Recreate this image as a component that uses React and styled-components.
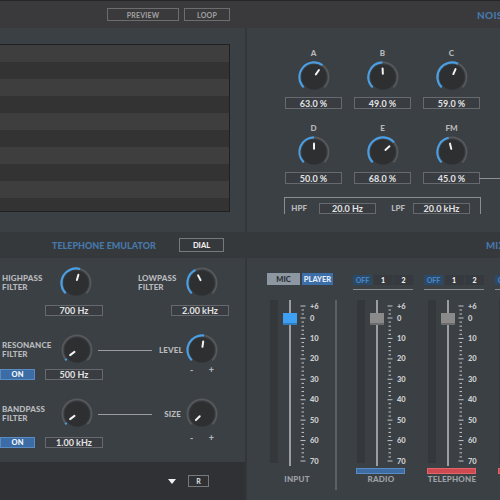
import React from 'react';
import styled, { createGlobalStyle } from 'styled-components';

const Global = createGlobalStyle`
  html, body { margin: 0; padding: 0; background: #2d3033; }
  body { font-family: Lato, "Open Sans", "Liberation Sans", sans-serif; }
  #root { width: 500px; height: 500px; }
`;

const Root = styled.div`
  width: 500px;
  height: 500px;
  overflow: hidden;
  display: flex;
  flex-direction: column;
  background: #32363a;
  font-family: Lato, "Open Sans", "Liberation Sans", sans-serif;
`;

/* ---------- top bar ---------- */
const TopBar = styled.div`
  flex: none;
  height: 27px;
  display: flex;
  background: #3a3a3c;
  border-top: 1px solid #262627;
`;
const TopLeft = styled.div`
  width: 245px;
  flex: none;
  box-sizing: border-box;
  display: flex;
  align-items: flex-start;
  gap: 5px;
  padding: 7px 0 0 107px;
`;
const TopButton = styled.div`
  width: ${p => p.$w}px;
  height: 13px;
  box-sizing: border-box;
  border: 1px solid #6d6d6f;
  color: #a2a2a2;
  font-size: 7px;
  font-weight: 700;
  letter-spacing: 0.2px;
  display: flex;
  align-items: center;
  justify-content: center;
`;
const BarRight = styled.div`
  flex: 1;
  display: flex;
  align-items: center;
  padding-left: ${p => p.$pl}px;
  overflow: hidden;
`;
const SectionTitle = styled.div`
  color: #4678ab;
  font-size: ${p => p.$size || 10}px;
  font-weight: 900;
  letter-spacing: ${p => p.$ls ?? 0.3}px;
  white-space: nowrap;
`;

/* ---------- generic rows / panels ---------- */
const PanelRow = styled.div`
  flex: none;
  height: ${p => p.$h}px;
  display: flex;
  gap: 2px;
  background: #33373b;
`;
const Panel = styled.div`
  background: #3b4045;
  box-sizing: border-box;
  ${p => (p.$w ? `width:${p.$w}px; flex:none;` : 'flex:1;')}
  ${p => (p.$h ? `height:${p.$h}px; flex:none;` : '')}
  padding: ${p => p.$pad || '0'};
  position: relative;
  overflow: hidden;
`;
const Column = styled.div`
  width: ${p => p.$w}px;
  flex: none;
  display: flex;
  flex-direction: column;
`;

/* ---------- display ---------- */
const Display = styled.div`
  margin-top: 16px;
  width: 230px;
  height: 168px;
  box-sizing: border-box;
  border: 1px solid #1f2021;
  border-left: none;
  background: repeating-linear-gradient(
    to bottom,
    #3e3e3e 0px,
    #3e3e3e 17px,
    #333333 17px,
    #333333 34px
  );
`;

/* ---------- knobs ---------- */
const KnobSvg = styled.svg`
  display: block;
  flex: none;
`;

function Knob({ v, className }) {
  const c = 17;
  const r = 14.6;
  const pt = (a, rr) => {
    const t = (a * Math.PI) / 180;
    return [c + rr * Math.sin(t), c - rr * Math.cos(t)];
  };
  const arc = (a0, a1) => {
    const [x0, y0] = pt(a0, r);
    const [x1, y1] = pt(a1, r);
    const large = a1 - a0 > 180 ? 1 : 0;
    return `M${x0.toFixed(2)} ${y0.toFixed(2)} A${r} ${r} 0 ${large} 1 ${x1.toFixed(2)} ${y1.toFixed(2)}`;
  };
  const a = -135 + v * 270;
  const [px0, py0] = pt(a, 3.2);
  const [px1, py1] = pt(a, 8.6);
  return (
    <KnobSvg className={className} width="34" height="34" viewBox="0 0 34 34">
      <circle cx={c} cy={c} r="12.6" fill="#2e2f31" />
      <path d={arc(-135, 135)} stroke="#58595b" strokeWidth="1.7" fill="none" />
      {v > 0.01 && <path d={arc(-135, a)} stroke="#4a9fe4" strokeWidth="2.1" fill="none" />}
      <line x1={px0} y1={py0} x2={px1} y2={py1} stroke="#f2f2f2" strokeWidth="2" strokeLinecap="round" />
    </KnobSvg>
  );
}

const ValueBox = styled.div`
  position: relative;
  width: ${p => p.$w || 57}px;
  height: ${p => p.$h || 12}px;
  box-sizing: border-box;
  border: 1px solid #66696d;
  background: #393d42;
  color: #e2e2e2;
  font-size: 9px;
  font-weight: 700;
  display: flex;
  align-items: center;
  justify-content: center;
  white-space: nowrap;
  ${p =>
    p.$tail
      ? `&::after { content: ''; position: absolute; left: 100%; top: 50%; width: 30px; height: 1px; background: #8d9094; }`
      : ''}
`;

/* ---------- noise section ---------- */
const KnobGrid = styled.div`
  display: grid;
  grid-template-columns: repeat(3, 57px);
  column-gap: 12px;
  row-gap: 14px;
`;
const KnobCell = styled.div`
  display: flex;
  flex-direction: column;
  align-items: center;
`;
const KnobLabel = styled.div`
  height: 10px;
  line-height: 10px;
  font-size: 8px;
  font-weight: 900;
  color: #b7b8ba;
  margin-bottom: 2px;
`;
const CellKnob = styled(Knob)`
  margin-bottom: 3px;
`;
const Bracket = styled.div`
  margin-top: 13px;
  width: 197px;
  height: 17px;
  box-sizing: border-box;
  border: 1px solid #8a8d91;
  border-bottom: none;
  padding-top: 4px;
  display: grid;
  grid-template-columns: 34px 57px 37px 57px;
  align-items: center;
  margin-left: -1px;
`;
const BracketLabel = styled.div`
  text-align: right;
  padding-right: ${p => p.$pr}px;
  font-size: 8px;
  font-weight: 900;
  color: #b7b8ba;
`;

/* ---------- header band ---------- */
const HeaderBand = styled.div`
  flex: none;
  height: 26px;
  display: flex;
  background: #36393c;
`;
const HeaderLeft = styled.div`
  width: 245px;
  flex: none;
  box-sizing: border-box;
  display: flex;
  align-items: center;
  padding-left: 52px;
`;
const DialButton = styled.div`
  margin-left: auto;
  margin-right: 21px;
  width: 45px;
  height: 14px;
  box-sizing: border-box;
  border: 1px solid #77797c;
  color: #ececec;
  font-size: 7.5px;
  font-weight: 900;
  display: flex;
  align-items: center;
  justify-content: center;
`;

/* ---------- telephone filters ---------- */
const FilterGrid = styled.div`
  display: grid;
  grid-template-columns: ${p => p.$cols};
  grid-template-rows: 34px 11px;
  row-gap: ${p => p.$gap}px;
  margin-top: ${p => p.$mt}px;
  align-items: center;
`;
const Place = styled.div`
  grid-column: ${p => p.$c};
  grid-row: ${p => p.$r};
  justify-self: ${p => p.$j || 'start'};
  margin-left: ${p => p.$ml || 0}px;
  display: flex;
`;
const FilterLabel = styled.div`
  grid-column: ${p => p.$c};
  grid-row: 1;
  padding-left: ${p => p.$pl || 0}px;
  padding-right: ${p => p.$pr || 0}px;
  text-align: ${p => p.$align || 'left'};
  font-size: 8px;
  line-height: 9px;
  font-weight: 900;
  color: #b9babc;
  letter-spacing: 0.1px;
  white-space: nowrap;
`;
const Connector = styled.div`
  grid-column: 3;
  grid-row: 1;
  justify-self: start;
  margin-left: -5px;
  width: 54px;
  height: 1px;
  background: #9a9c9f;
`;
const OnButton = styled.div`
  grid-column: 1;
  grid-row: 2;
  width: 35px;
  height: 11px;
  box-sizing: border-box;
  background: #3b6ca5;
  border: 1px solid #5a8bc2;
  color: #f4f7fb;
  font-size: 7.5px;
  font-weight: 900;
  display: flex;
  align-items: center;
  justify-content: center;
`;
const Range = styled.div`
  grid-column: 5;
  grid-row: 2;
  align-self: start;
  justify-self: center;
  margin-top: -3px;
  width: 24px;
  display: flex;
  justify-content: space-between;
  line-height: 8px;
  font-size: 9px;
  font-weight: 900;
  color: #b5b6b8;
`;

/* ---------- bottom bar ---------- */
const BottomBar = styled.div`
  flex: 1;
  background: #2f3134;
  display: flex;
  align-items: center;
  padding-left: 168px;
`;
const DropArrow = styled.div`
  width: 0;
  height: 0;
  border-left: 4px solid transparent;
  border-right: 4px solid transparent;
  border-top: 5px solid #f0f0f0;
`;
const SmallButton = styled.div`
  margin-left: 12px;
  width: 21px;
  height: 12px;
  box-sizing: border-box;
  border: 1px solid #76787b;
  color: #d4d4d4;
  font-size: 7px;
  font-weight: 900;
  display: flex;
  align-items: center;
  justify-content: center;
`;

/* ---------- mixer ---------- */
const Mixer = styled.div`
  display: flex;
  align-items: flex-start;
  padding: 15px 0 0 20px;
  height: 100%;
  box-sizing: border-box;
`;
const Strip = styled.div`
  width: ${p => p.$w}px;
  flex: none;
  display: flex;
  flex-direction: column;
`;
const SourceRow = styled.div`
  display: flex;
  gap: 2px;
  height: 17px;
`;
const SourceButton = styled.div`
  width: ${p => p.$w}px;
  height: 12px;
  background: ${p => (p.$active ? '#3c6fa9' : '#8c97a2')};
  color: ${p => (p.$active ? '#e4edf8' : '#2b2e33')};
  font-size: 7.5px;
  font-weight: 900;
  display: flex;
  align-items: center;
  justify-content: center;
`;
const SelGroup = styled.div`
  width: 60px;
  height: 17px;
  box-sizing: border-box;
  padding-top: 2px;
  border-bottom: 1px solid #8a8d90;
  display: flex;
  gap: 1.5px;
  align-items: flex-start;
`;
const SelButton = styled.div`
  flex: 1;
  height: 10px;
  background: ${p => (p.$off ? '#2b4a68' : '#363a3e')};
  color: ${p => (p.$off ? '#4a84c6' : '#f2f2f2')};
  font-size: 7px;
  font-weight: 900;
  display: flex;
  align-items: center;
  justify-content: center;
`;
const FaderBlock = styled.div`
  display: flex;
  height: 166px;
  margin-top: 10px;
  margin-left: ${p => p.$ml}px;
`;
const Meter = styled.div`
  width: 8px;
  height: 163px;
  background: #34383b;
`;
const Track = styled.div`
  position: relative;
  width: 14px;
  height: 166px;
  margin-left: 5px;
  &::before {
    content: '';
    position: absolute;
    left: 6px;
    top: 0;
    bottom: 0;
    width: 2px;
    background: #9c9d9e;
  }
`;
const Handle = styled.div`
  position: absolute;
  left: 0;
  top: 13px;
  width: 14px;
  height: 12px;
  background: ${p => p.$c};
  box-shadow: inset 0 -2px 0 rgba(0, 0, 0, 0.22);
`;
const ScaleSvg = styled.svg`
  display: block;
  margin-left: 3px;
  overflow: visible;
`;
const BarSlot = styled.div`
  height: 8px;
  padding-top: 2px;
  box-sizing: border-box;
  padding-left: 3px;
`;
const ColorBar = styled.div`
  width: 49px;
  height: 6px;
  box-sizing: border-box;
  background: ${p => p.$c};
  border: 1px solid ${p => p.$b};
`;
const StripLabel = styled.div`
  width: 56px;
  margin-left: ${p => p.$ml || 0}px;
  text-align: center;
  line-height: 10px;
  font-size: 8px;
  font-weight: 900;
  color: #9fa2a5;
  letter-spacing: 0.2px;
  white-space: nowrap;
`;
const Separator = styled.div`
  width: 2px;
  height: 190px;
  margin-top: 27px;
  margin-right: 16px;
  background: #5d6165;
  flex: none;
`;

function Scale() {
  const y = d => (d < 0 ? 18 + d * 2 : 18 + d * 2.043);
  const ticks = [];
  for (let d = -6; d <= 70; d += 2) ticks.push(d);
  const labels = [-6, 0, 10, 20, 30, 40, 50, 60, 70];
  return (
    <ScaleSvg width="28" height="170" viewBox="0 0 28 170">
      {ticks.map(d => {
        const major = d === -6 || d % 10 === 0;
        return (
          <line
            key={d}
            x1={major ? 0.5 : 1.5}
            x2={major ? 5.5 : 4}
            y1={y(d)}
            y2={y(d)}
            stroke="#c4c5c7"
            strokeWidth="1"
          />
        );
      })}
      {labels.map(d => (
        <text
          key={d}
          x="10"
          y={y(d) + 2.5}
          fontSize="7.5"
          fontWeight="900"
          fill="#cfd0d2"
          fontFamily="Lato, 'Open Sans', sans-serif"
        >
          {d === -6 ? '+6' : d}
        </text>
      ))}
    </ScaleSvg>
  );
}

function Fader({ ml, color }) {
  return (
    <FaderBlock $ml={ml}>
      <Meter />
      <Track>
        <Handle $c={color} />
      </Track>
      <Scale />
    </FaderBlock>
  );
}

function ChannelStrip({ label, bar, border }) {
  return (
    <Strip $w={71}>
      <SelGroup>
        <SelButton $off>OFF</SelButton>
        <SelButton>1</SelButton>
        <SelButton>2</SelButton>
      </SelGroup>
      <Fader ml={4} color="#8a8a8b" />
      <BarSlot>
        <ColorBar $c={bar} $b={border} />
      </BarSlot>
      <StripLabel>{label}</StripLabel>
    </Strip>
  );
}

const noise = [
  { l: 'A', v: 0.63, t: '63.0 %' },
  { l: 'B', v: 0.49, t: '49.0 %' },
  { l: 'C', v: 0.59, t: '59.0 %' },
  { l: 'D', v: 0.5, t: '50.0 %' },
  { l: 'E', v: 0.68, t: '68.0 %' },
  { l: 'FM', v: 0.45, t: '45.0 %', tail: true },
];

export default function App() {
  return (
    <Root>
      <Global />
      <TopBar>
        <TopLeft>
          <TopButton $w={72}>PREVIEW</TopButton>
          <TopButton $w={46}>LOOP</TopButton>
        </TopLeft>
        <BarRight $pl={232}>
          <SectionTitle>NOISE</SectionTitle>
        </BarRight>
      </TopBar>

      <PanelRow $h={204}>
        <Panel $w={245}>
          <Display />
        </Panel>
        <Panel $pad="20px 0 0 38px">
          <KnobGrid>
            {noise.map(k => (
              <KnobCell key={k.l}>
                <KnobLabel>{k.l}</KnobLabel>
                <CellKnob v={k.v} />
                <ValueBox $tail={k.tail}>{k.t}</ValueBox>
              </KnobCell>
            ))}
          </KnobGrid>
          <Bracket>
            <BracketLabel $pr={12}>HPF</BracketLabel>
            <ValueBox $h={11}>20.0 Hz</ValueBox>
            <BracketLabel $pr={8}>LPF</BracketLabel>
            <ValueBox $h={11}>20.0 kHz</ValueBox>
          </Bracket>
        </Panel>
      </PanelRow>

      <HeaderBand>
        <HeaderLeft>
          <SectionTitle $size={9} $ls={0}>TELEPHONE EMULATOR</SectionTitle>
          <DialButton>DIAL</DialButton>
        </HeaderLeft>
        <BarRight $pl={241}>
          <SectionTitle $size={9.5}>MIXER</SectionTitle>
        </BarRight>
      </HeaderBand>

      <PanelRow $h={242}>
        <Column $w={245}>
          <Panel $h={204}>
            <FilterGrid $cols="45px 58px 35px 33px 58px" $gap={5} $mt={8}>
              <FilterLabel $c={1} $pl={2}>HIGHPASS<br />FILTER</FilterLabel>
              <Place $c={2} $r={1} $ml={14}><Knob v={0.56} /></Place>
              <FilterLabel $c={4}>LOWPASS<br />FILTER</FilterLabel>
              <Place $c={5} $r={1} $ml={14}><Knob v={0.4} /></Place>
              <Place $c={2} $r={2}><ValueBox $w={58} $h={11}>700 Hz</ValueBox></Place>
              <Place $c={5} $r={2}><ValueBox $w={58} $h={11}>2.00 kHz</ValueBox></Place>
            </FilterGrid>

            <FilterGrid $cols="45px 58px 56px 26px 34px" $gap={2} $mt={17}>
              <FilterLabel $c={1} $pl={2}>RESONANCE<br />FILTER</FilterLabel>
              <Place $c={2} $r={1} $ml={15}><Knob v={0.03} /></Place>
              <Connector />
              <FilterLabel $c={4} $align="right" $pr={4}>LEVEL</FilterLabel>
              <Place $c={5} $r={1}><Knob v={0.53} /></Place>
              <OnButton>ON</OnButton>
              <Place $c={2} $r={2}><ValueBox $w={58} $h={11}>500 Hz</ValueBox></Place>
              <Range><span>-</span><span>+</span></Range>
            </FilterGrid>

            <FilterGrid $cols="45px 58px 56px 26px 34px" $gap={6} $mt={17}>
              <FilterLabel $c={1} $pl={2}>BANDPASS<br />FILTER</FilterLabel>
              <Place $c={2} $r={1} $ml={15}><Knob v={0.03} /></Place>
              <Connector />
              <FilterLabel $c={4} $align="right" $pr={4}>SIZE</FilterLabel>
              <Place $c={5} $r={1}><Knob v={0.0} /></Place>
              <OnButton>ON</OnButton>
              <Place $c={2} $r={2}><ValueBox $w={58} $h={11}>1.00 kHz</ValueBox></Place>
              <Range><span>-</span><span>+</span></Range>
            </FilterGrid>
          </Panel>
          <BottomBar>
            <DropArrow />
            <SmallButton>R</SmallButton>
          </BottomBar>
        </Column>

        <Panel>
          <Mixer>
            <Strip $w={68}>
              <SourceRow>
                <SourceButton $w={33}>MIC</SourceButton>
                <SourceButton $w={31} $active>PLAYER</SourceButton>
              </SourceRow>
              <Fader ml={3} color="#3ea0f2" />
              <BarSlot />
              <StripLabel $ml={2}>INPUT</StripLabel>
            </Strip>
            <Separator />
            <ChannelStrip label="RADIO" bar="#3d6ca3" border="#5b8bc4" />
            <ChannelStrip label="TELEPHONE" bar="#cf4a50" border="#e06468" />
            <ChannelStrip label="NOISE" bar="#cf4a50" border="#e06468" />
          </Mixer>
        </Panel>
      </PanelRow>
    </Root>
  );
}
